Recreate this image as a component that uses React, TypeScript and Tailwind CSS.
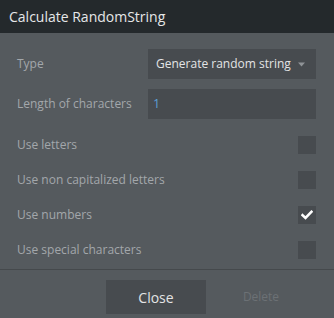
import { useState } from "react";

const font = { fontFamily: '"Open Sans", "Noto Sans", sans-serif' };

function CheckRow({
  label,
  on,
  onToggle,
}: {
  label: string;
  on: boolean;
  onToggle: () => void;
}) {
  return (
    <div className="flex h-[35px] items-center justify-between">
      <span className="text-[12px] text-[#a3a7ab]">{label}</span>
      <button
        type="button"
        role="checkbox"
        aria-checked={on}
        onClick={onToggle}
        className="flex h-[18px] w-[18px] items-center justify-center bg-[#474b4f]"
      >
        {on && (
          <svg width="12" height="10" viewBox="0 0 12 10" aria-hidden="true">
            <path
              d="M1.5 5.2 L4.5 8 L10.5 1.8"
              fill="none"
              stroke="#ffffff"
              strokeWidth="2.6"
              strokeLinecap="square"
            />
          </svg>
        )}
      </button>
    </div>
  );
}

export default function App() {
  const [opts, setOpts] = useState({
    letters: false,
    lower: false,
    numbers: true,
    special: false,
  });
  const toggle = (k: keyof typeof opts) =>
    setOpts((o) => ({ ...o, [k]: !o[k] }));

  return (
    <div className="h-[318px] w-[334px] bg-[#555a5e]" style={font}>
      <div className="flex h-[33px] items-center bg-[#24292c] px-[9px] text-[14px] text-[#e6e7e8]">
        Calculate RandomString
      </div>

      <div className="px-[18px] pt-[16px] pb-[2px] pl-[17px]">
        <div className="flex h-[30px] items-center justify-between">
          <span className="text-[12px] text-[#a3a7ab]">Type</span>
          <div className="flex h-[30px] w-[168px] items-center justify-between bg-[#474b4f] pl-[8px] pr-[11px] text-[12px] whitespace-nowrap text-[#e3e4e5]">
            <span>Generate random string</span>
            <svg width="7" height="5" viewBox="0 0 7 5" aria-hidden="true">
              <path d="M0 0.5 H7 L3.5 4.5 Z" fill="#8f9397" />
            </svg>
          </div>
        </div>
        <div className="mt-[10px] flex h-[30px] items-center justify-between">
          <span className="text-[12px] text-[#a3a7ab]">Length of characters</span>
          <div className="flex h-[30px] w-[168px] items-center bg-[#474b4f] px-[5px] text-[12.5px] text-[#5b9fd6]">
            1
          </div>
        </div>
        <div className="mt-[8px]">
          <CheckRow label="Use letters" on={opts.letters} onToggle={() => toggle("letters")} />
          <CheckRow label="Use non capitalized letters" on={opts.lower} onToggle={() => toggle("lower")} />
          <CheckRow label="Use numbers" on={opts.numbers} onToggle={() => toggle("numbers")} />
          <CheckRow label="Use special characters" on={opts.special} onToggle={() => toggle("special")} />
        </div>
      </div>

      <div className="border-t border-[#45494c]" />

      <div className="flex pt-[10px] pl-[106px]">
        <button
          type="button"
          className="h-[34px] w-[100px] bg-[#474b4f] text-[14px] text-[#e3e4e5]"
        >
          Close
        </button>
        <button
          type="button"
          className="h-[34px] w-[110px] text-[12px] text-[#6c7175]"
        >
          Delete
        </button>
      </div>
    </div>
  );
}
